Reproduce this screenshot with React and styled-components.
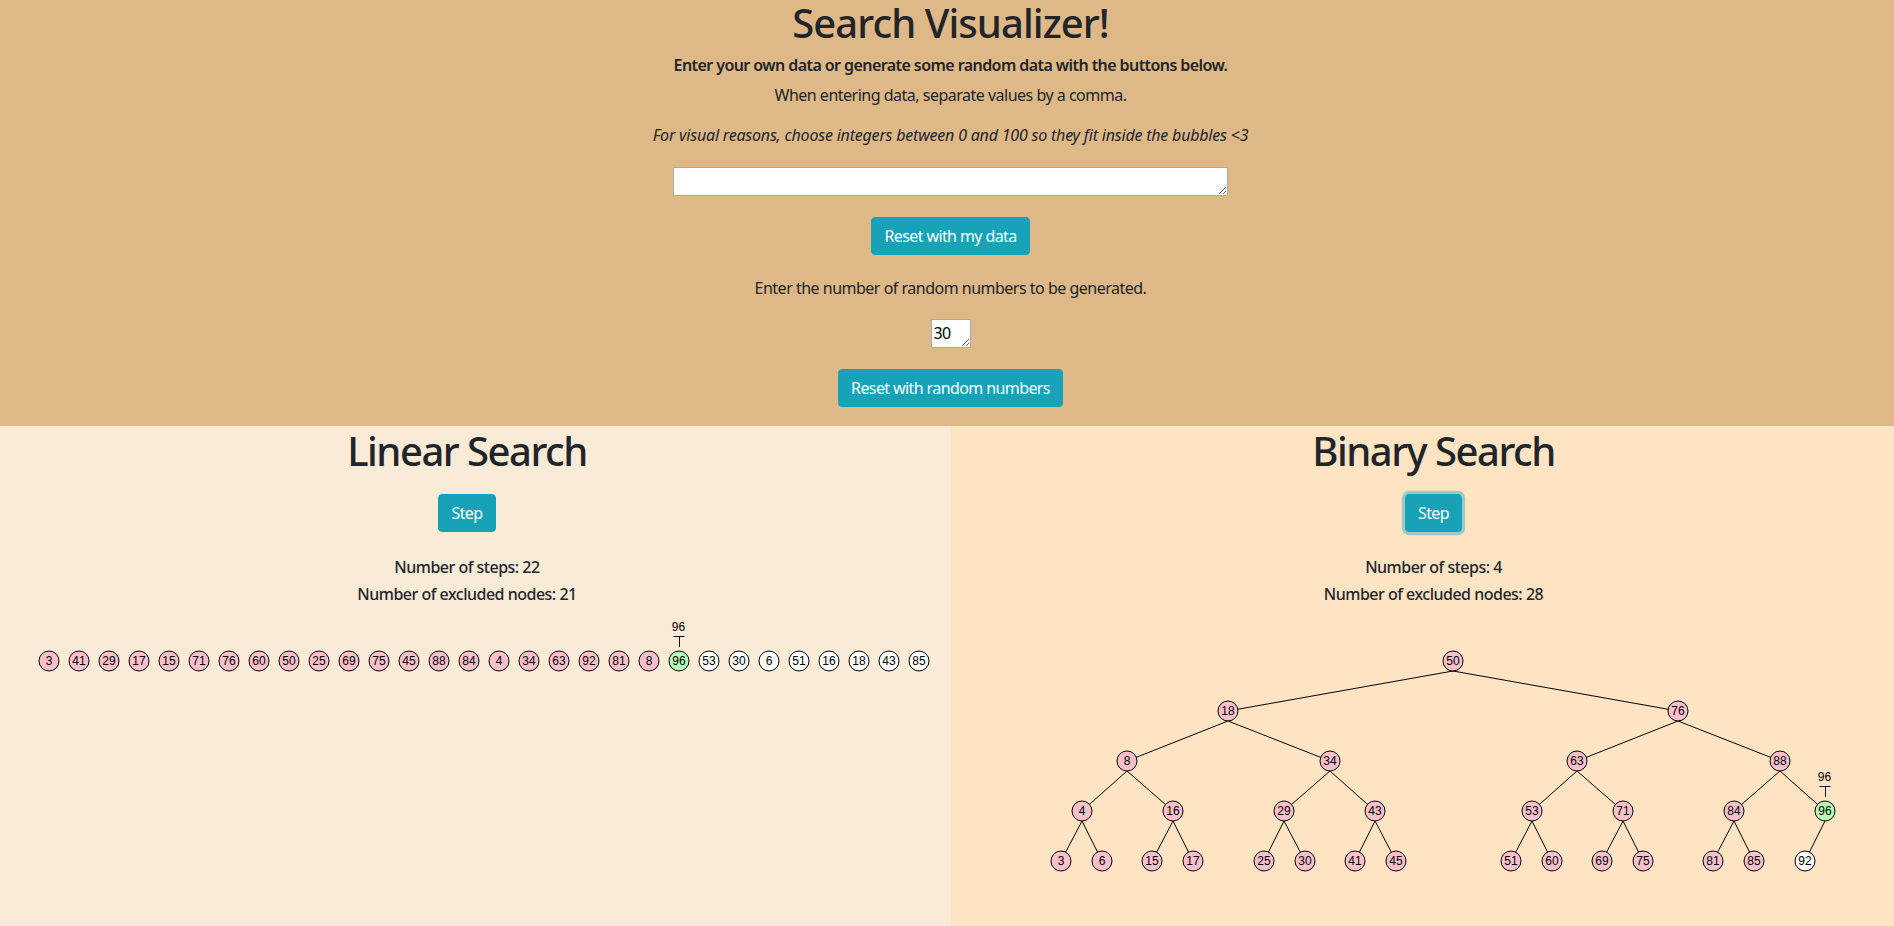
import React from "react";
import styled, { createGlobalStyle } from "styled-components";

const GlobalStyle = createGlobalStyle`
  html, body {
    margin: 0;
    padding: 0;
    overflow: hidden;
  }
  body {
    font-family: "Noto Sans", "Open Sans", Arial, sans-serif;
    font-size: 16px;
    line-height: 24px;
    color: #212529;
  }
  * {
    box-sizing: border-box;
  }
`;

// linear search row, left to right
const linearValues = [3, 41, 29, 17, 15, 71, 76, 60, 50, 25, 69, 75, 45, 88, 84, 4, 34, 63, 92, 81, 8, 96, 53, 30, 6, 51, 16, 18, 43, 85];
const linearFound = 21;

// binary tree nodes in page coordinates
const levelY = [661, 711, 761, 811, 861];
const tree = [
  { v: 50, x: 1453, l: 0, c: [18, 76] },
  { v: 18, x: 1228, l: 1, c: [8, 34] },
  { v: 76, x: 1678, l: 1, c: [63, 88] },
  { v: 8, x: 1127, l: 2, c: [4, 16] },
  { v: 34, x: 1330, l: 2, c: [29, 43] },
  { v: 63, x: 1577, l: 2, c: [53, 71] },
  { v: 88, x: 1780, l: 2, c: [84, 96] },
  { v: 4, x: 1082, l: 3, c: [3, 6] },
  { v: 16, x: 1173, l: 3, c: [15, 17] },
  { v: 29, x: 1284, l: 3, c: [25, 30] },
  { v: 43, x: 1375, l: 3, c: [41, 45] },
  { v: 53, x: 1532, l: 3, c: [51, 60] },
  { v: 71, x: 1623, l: 3, c: [69, 75] },
  { v: 84, x: 1734, l: 3, c: [81, 85] },
  { v: 96, x: 1825, l: 3, c: [92] },
  { v: 3, x: 1061, l: 4, c: [] },
  { v: 6, x: 1102, l: 4, c: [] },
  { v: 15, x: 1152, l: 4, c: [] },
  { v: 17, x: 1193, l: 4, c: [] },
  { v: 25, x: 1264, l: 4, c: [] },
  { v: 30, x: 1305, l: 4, c: [] },
  { v: 41, x: 1355, l: 4, c: [] },
  { v: 45, x: 1396, l: 4, c: [] },
  { v: 51, x: 1511, l: 4, c: [] },
  { v: 60, x: 1552, l: 4, c: [] },
  { v: 69, x: 1602, l: 4, c: [] },
  { v: 75, x: 1643, l: 4, c: [] },
  { v: 81, x: 1713, l: 4, c: [] },
  { v: 85, x: 1754, l: 4, c: [] },
  { v: 92, x: 1805, l: 4, c: [] },
];

const nodeFills = { excluded: "#ffc0cb", found: "#b6fbb6", open: "#ffffff" };

const Top = styled.section`
  display: flex;
  flex-direction: column;
  align-items: center;
  height: 426px;
  padding-left: 7px;
  background: #deb887;
`;

const Title = styled.h1`
  margin: 0 0 11px;
  font-size: 40px;
  line-height: 45px;
  font-weight: 500;
  letter-spacing: -0.93px;
`;

const PanelTitle = styled(Title)`
  letter-spacing: -1.5px;
`;

const Lead = styled.h6`
  margin: 0 0 8px;
  font-size: 16px;
  line-height: 19.2px;
  font-weight: 600;
  letter-spacing: -0.57px;
`;

const Text = styled.p`
  margin: ${(p) => p.$top || 0}px 0 16px;
  letter-spacing: ${(p) => (p.$italic ? "-0.2px" : "-0.5px")};
  font-style: ${(p) => (p.$italic ? "italic" : "normal")};
`;

const Field = styled.textarea`
  display: block;
  width: ${(p) => p.$width}px;
  height: ${(p) => p.$height}px;
  margin: ${(p) => p.$top}px 0 21px;
  padding: 3px 2px 1px;
  border: 1px solid #a9a9a9;
  border-radius: 0;
  outline: none;
  background: #fff;
  color: #000;
  font: 16px/20px "Noto Sans", sans-serif;
  letter-spacing: -0.6px;
`;

const Button = styled.button`
  display: block;
  height: 38px;
  padding: 6px 12px;
  border: 1px solid #17a2b8;
  border-radius: 4px;
  background: #17a2b8;
  color: #fff;
  font: 16px/24px "Noto Sans", sans-serif;
  letter-spacing: -0.6px;
  box-shadow: ${(p) => (p.$focused ? "0 0 0 3.2px rgba(58, 176, 195, 0.5)" : "none")};
`;

const Panels = styled.div`
  display: flex;
  height: 500px;
`;

const Panel = styled.section`
  flex: ${(p) => (p.$right ? "1" : "0 0 951px")};
  overflow: hidden;
  background: ${(p) => (p.$right ? "#ffe4c4" : "#faebd7")};
`;

const PanelHead = styled.div`
  display: flex;
  flex-direction: column;
  align-items: center;
  height: 186px;
  padding: 2px ${(p) => (p.$right ? "0 0 22px" : "17px 0 0")};
`;

const PanelStep = styled.div`
  margin: 10px 0 26px;
`;

const Stat = styled.h6`
  margin: 0 0 8px;
  font-size: 16px;
  line-height: 19.2px;
  font-weight: 500;
  letter-spacing: -0.5px;
`;

const Canvas = styled.svg`
  display: block;
`;

const NodeCircle = styled.circle`
  fill: ${(p) => nodeFills[p.$state]};
  stroke: #000;
  stroke-width: 1;
`;

const Edge = styled.line`
  stroke: #000;
  stroke-width: 1;
`;

const NodeLabel = styled.text`
  font-family: "Liberation Sans", Arial, sans-serif;
  font-size: 12px;
  fill: #000;
  text-anchor: middle;
`;

const Node = ({ x, y, value, state }) => (
  <g>
    <NodeCircle cx={x} cy={y} r={10} $state={state} />
    <NodeLabel x={x} y={y + 4}>{value}</NodeLabel>
  </g>
);

// the little "T" marker with the target value above a node
const Target = ({ x, y, value }) => (
  <g>
    <NodeLabel x={x - 0.5} y={y - 30}>{value}</NodeLabel>
    <Edge x1={x - 5.5} y1={y - 24.5} x2={x + 5.5} y2={y - 24.5} />
    <Edge x1={x + 0.5} y1={y - 24.5} x2={x + 0.5} y2={y - 14} />
  </g>
);

const LinearRow = () => (
  <Canvas width="951" height="314" viewBox="0 612 951 314">
    {linearValues.map((v, i) => (
      <Node
        key={i}
        x={49 + 30 * i}
        y={661}
        value={v}
        state={i === linearFound ? "found" : i < linearFound ? "excluded" : "open"}
      />
    ))}
    <Target x={679} y={661} value={96} />
  </Canvas>
);

const treeState = (v) => (v === 96 ? "found" : v === 92 ? "open" : "excluded");

const BinaryTree = () => {
  const find = (v) => tree.find((n) => n.v === v);
  return (
    <Canvas width="943" height="314" viewBox="951 612 943 314">
      {tree.map((n) =>
        n.c.map((c) => (
          <Edge
            key={`${n.v}-${c}`}
            x1={n.x}
            y1={levelY[n.l] + 10}
            x2={find(c).x}
            y2={levelY[find(c).l]}
          />
        ))
      )}
      {tree.map((n) => (
        <Node key={n.v} x={n.x} y={levelY[n.l]} value={n.v} state={treeState(n.v)} />
      ))}
      <Target x={1825} y={811} value={96} />
    </Canvas>
  );
};

const App = () => {
  return (
    <>
      <GlobalStyle />
      <Top>
        <Title>Search Visualizer!</Title>
        <Lead>Enter your own data or generate some random data with the buttons below.</Lead>
        <Text>When entering data, separate values by a comma.</Text>
        <Text $italic>For visual reasons, choose integers between 0 and 100 so they fit inside the bubbles &lt;3</Text>
        <Field $width={555} $height={29} $top={4} defaultValue="" />
        <Button>Reset with my data</Button>
        <Text $top={21}>Enter the number of random numbers to be generated.</Text>
        <Field $width={40} $height={29} $top={3} defaultValue="30" />
        <Button>Reset with random numbers</Button>
      </Top>
      <Panels>
        <Panel>
          <PanelHead>
            <PanelTitle>Linear Search</PanelTitle>
            <PanelStep>
              <Button>Step</Button>
            </PanelStep>
            <Stat>Number of steps: 22</Stat>
            <Stat>Number of excluded nodes: 21</Stat>
          </PanelHead>
          <LinearRow />
        </Panel>
        <Panel $right>
          <PanelHead $right>
            <PanelTitle>Binary Search</PanelTitle>
            <PanelStep>
              <Button $focused>Step</Button>
            </PanelStep>
            <Stat>Number of steps: 4</Stat>
            <Stat>Number of excluded nodes: 28</Stat>
          </PanelHead>
          <BinaryTree />
        </Panel>
      </Panels>
    </>
  );
};

export default App;
